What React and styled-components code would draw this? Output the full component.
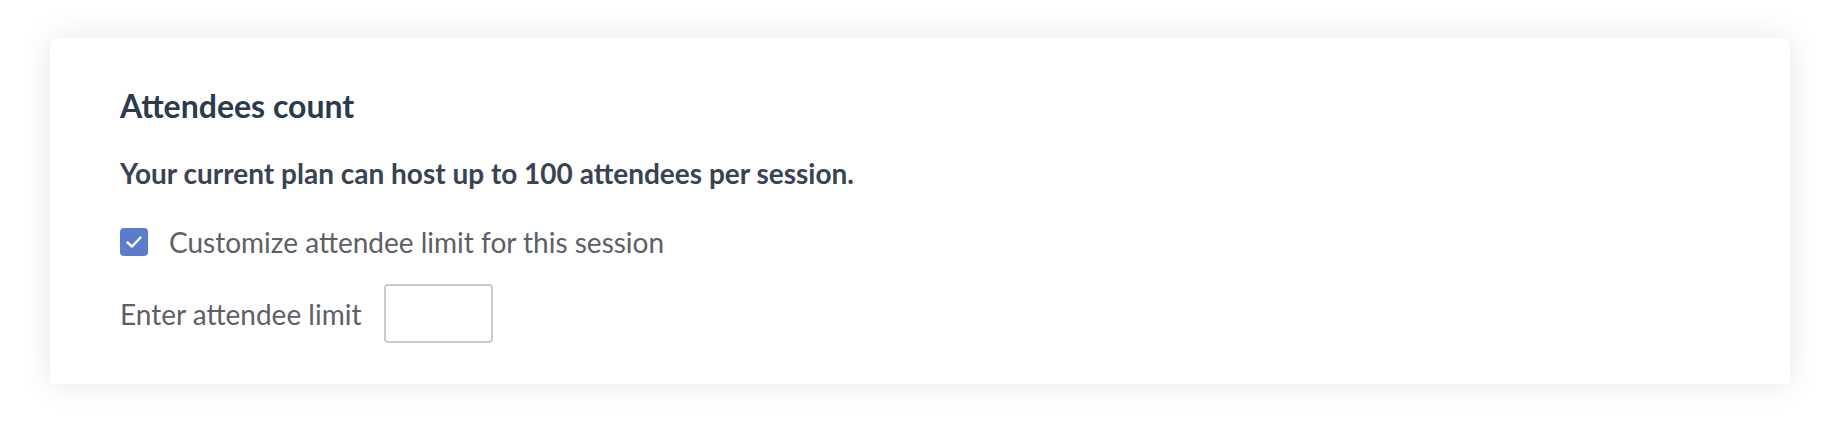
import React from "react";
import { useState } from "react";
import styled, { createGlobalStyle } from "styled-components";

const GlobalStyle = createGlobalStyle`
  html, body {
    margin: 0;
    padding: 0;
    background: #fff;
    font-family: Lato, "Open Sans", sans-serif;
  }
`;

const Page = styled.div`
  padding: 38px 38px 38px 50px;
`;

const Card = styled.section`
  width: 1740px;
  height: 346px;
  box-sizing: border-box;
  background: #fff;
  border-radius: 7px 7px 0 0;
  box-shadow: 0 0 30px rgba(0, 0, 0, 0.1);
  padding: 49px 70px;
  display: flex;
  flex-direction: column;
`;

const Title = styled.h2`
  margin: 0;
  font-size: 32px;
  font-weight: 700;
  color: #2c3a4e;
  line-height: 38px;
`;

const Note = styled.p`
  margin: 31px 0 0;
  font-size: 28px;
  font-weight: 700;
  color: #3a4352;
  line-height: 34px;
`;

const CheckRow = styled.label`
  margin-top: 35px;
  display: flex;
  align-items: center;
  gap: 21px;
  font-size: 28px;
  line-height: 34px;
  color: #5c6068;
  cursor: pointer;
`;

const Box = styled.span`
  width: 28px;
  height: 28px;
  box-sizing: border-box;
  border-radius: 4px;
  background: ${(p) => (p.checked ? "#5b7cca" : "#fff")};
  border: ${(p) => (p.checked ? "none" : "1px solid #c5c8cc")};
  display: flex;
  align-items: center;
  justify-content: center;
`;

const LimitRow = styled.div`
  margin-top: 25px;
  display: flex;
  align-items: center;
  gap: 23px;
  font-size: 28px;
  line-height: 34px;
  color: #5c6068;
`;

const LimitInput = styled.input`
  width: 109px;
  height: 59px;
  box-sizing: border-box;
  border: 2px solid #c9cacd;
  border-radius: 4px;
  font-family: inherit;
  font-size: 24px;
  padding: 0 10px;
  outline: none;
`;

const App = () => {
  const [custom, setCustom] = useState(true);

  return (
    <>
      <GlobalStyle />
      <Page>
        <Card>
          <Title>Attendees count</Title>
          <Note>Your current plan can host up to 100 attendees per session.</Note>
          <CheckRow onClick={() => setCustom(!custom)}>
            <Box checked={custom}>
              {custom && (
                <svg width="18" height="14" viewBox="0 0 18 14">
                  <path
                    d="M2.5 7.5l4.5 4 8.5-9"
                    fill="none"
                    stroke="#fff"
                    strokeWidth="2.4"
                    strokeLinecap="round"
                    strokeLinejoin="round"
                  />
                </svg>
              )}
            </Box>
            Customize attendee limit for this session
          </CheckRow>
          <LimitRow>
            Enter attendee limit
            <LimitInput type="text" />
          </LimitRow>
        </Card>
      </Page>
    </>
  );
};

export default App;
